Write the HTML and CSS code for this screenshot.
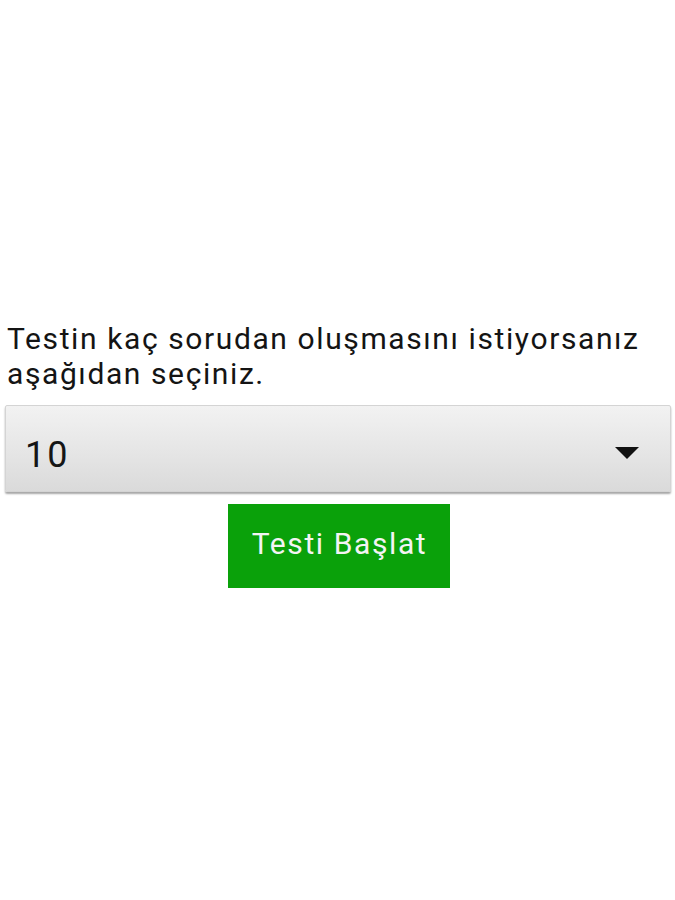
FILE: index.html
```html
<!DOCTYPE html>
<html lang="tr">
<head>
<meta charset="utf-8">
<title>Test</title>
<link rel="stylesheet" href="styles.css">
</head>
<body>
<main class="page">
  <p class="prompt">Testin kaç sorudan oluşmasını istiyorsanız aşağıdan seçiniz.</p>
  <div class="spinner">
    <span class="spinner-value">10</span>
    <svg class="spinner-arrow" width="24" height="12" viewBox="0 0 24 12"><path d="M0 0 H24 L12 12 Z" fill="#111"/></svg>
  </div>
  <div class="actions">
    <button class="start">Testi Başlat</button>
  </div>
</main>
</body>
</html>
```
FILE: styles.css
```css
html, body {
  margin: 0;
  padding: 0;
  background: #ffffff;
}
body {
  width: 675px;
  height: 900px;
  font-family: Roboto, "Noto Sans", sans-serif;
  color: #111111;
}
.page {
  padding: 321px 4px 0 5px;
}
.prompt {
  margin: 0 0 14px 0;
  padding-left: 2px;
  font-size: 30px;
  line-height: 35px;
  letter-spacing: 1.6px;
  color: #141414;
}
.spinner {
  box-sizing: border-box;
  height: 87px;
  display: flex;
  align-items: flex-start;
  justify-content: space-between;
  padding: 28px 31px 0 19px;
  background: linear-gradient(#f2f2f2, #e4e4e4 60%, #dadada);
  border: 1px solid #d4d4d4;
  border-radius: 2px;
  box-shadow: 0 2px 2px rgba(0, 0, 0, 0.35);
}
.spinner-value {
  font-size: 36px;
  line-height: 42px;
  letter-spacing: 2px;
  color: #151515;
}
.spinner-arrow {
  margin-top: 13px;
}
.actions {
  display: flex;
  justify-content: center;
  margin-top: 12px;
}
.start {
  width: 222px;
  height: 84px;
  border: none;
  border-radius: 0;
  background: #0aa10a;
  color: #f4f4f4;
  font-family: Roboto, "Noto Sans", sans-serif;
  font-size: 30px;
  letter-spacing: 1.6px;
  padding: 0 0 5px 2px;
  margin-left: 1px;
}
```
